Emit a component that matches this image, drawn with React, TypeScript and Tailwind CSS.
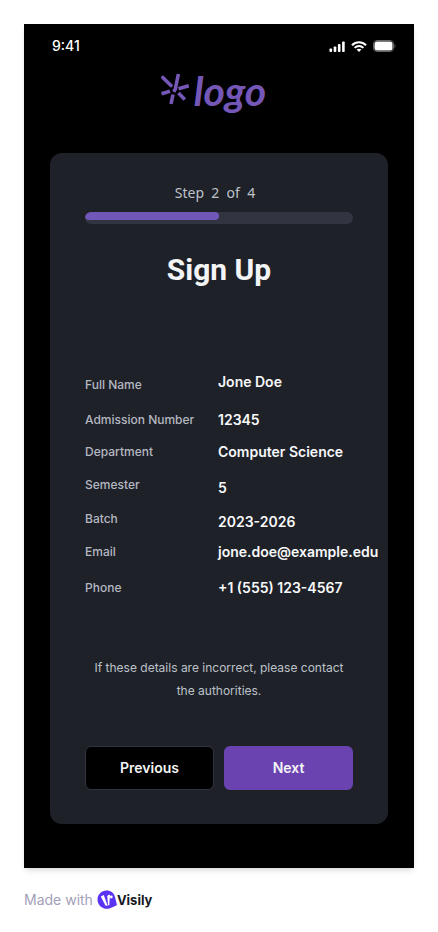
import React from "react";

type Detail = { label: string; value: string; row: string };

const details: Detail[] = [
  { label: "Full Name", value: "Jone Doe", row: "items-end" },
  { label: "Admission Number", value: "12345", row: "mt-3 items-center" },
  { label: "Department", value: "Computer Science", row: "mt-1.5 items-center" },
  { label: "Semester", value: "5", row: "mt-2.5 items-start" },
  { label: "Batch", value: "2023-2026", row: "mt-2 items-start" },
  { label: "Email", value: "jone.doe@example.edu", row: "mt-1 items-center" },
  { label: "Phone", value: "+1 (555) 123-4567", row: "mt-2.5 items-center" },
];

function StatusBar() {
  return (
    <div className="flex h-11 items-center justify-between pr-[18px] pl-7 text-white">
      <span className="text-sm font-medium">9:41</span>
      <div className="flex items-center gap-1.5" aria-hidden="true">
        <svg width="16" height="11" viewBox="0 0 16 11" fill="currentColor">
          <rect x="0.5" y="7.5" width="2.6" height="3.5" rx=".8" />
          <rect x="4.7" y="5.5" width="2.6" height="5.5" rx=".8" />
          <rect x="8.9" y="3" width="2.6" height="8" rx=".8" />
          <rect x="13.1" y="0.5" width="2.6" height="10.5" rx=".8" />
        </svg>
        <svg width="16" height="11" viewBox="0 0 16 11" fill="none" stroke="currentColor" strokeWidth="2">
          <path d="M1 4.2C5 .2 11 .2 15 4.2" />
          <path d="M3.6 6.9c2.5-2.5 6.3-2.5 8.8 0" />
          <path d="M5.6 8.6c1.4-1.3 3.4-1.3 4.8 0L8 11z" fill="currentColor" stroke="none" />
        </svg>
        <svg width="23" height="12" viewBox="0 0 23 12">
          <rect x=".5" y=".5" width="20" height="11" rx="3.5" fill="none" stroke="#666" />
          <rect x="1.5" y="1.5" width="18" height="9" rx="2.5" fill="#fff" />
          <path d="M21.5 4c1.3.5 1.3 3.5 0 4z" fill="#666" />
        </svg>
      </div>
    </div>
  );
}

function Logo() {
  return (
    <div className="flex h-[50px] items-start justify-center gap-1 pr-3 text-[#7557b8]">
      <svg className="mt-1" width="30" height="34" viewBox="0 0 30 34" fill="none" stroke="currentColor" strokeWidth="3.6" aria-hidden="true">
        <path d="M18.4 2L15.3 17L13.7 19.8" />
        <path d="M2.8 5.5L11 13.5" strokeLinecap="round" />
        <path d="M1.5 21.8L10 19.2" />
        <path d="M13 22.5L11 32" />
        <path d="M18.5 21L24.8 27.5" />
        <path d="M18.5 16.8L28.8 13.8" />
      </svg>
      <span className="font-['Lato',sans-serif] text-[41px] leading-[46px] font-bold italic">logo</span>
    </div>
  );
}

export default function App() {
  return (
    <div className="min-h-screen bg-white p-6 font-['Inter',sans-serif]">
      <main className="bg-black pb-11 shadow-md">
        <StatusBar />
        <Logo />
        <section className="mx-[26px] mt-[35px] rounded-xl bg-[#1f2128] px-[35px] pt-[30px] pb-[34px]">
          <p className="pr-2 text-center font-['Noto_Sans',sans-serif] text-sm leading-5 whitespace-pre text-[#bdc1ca]">
            {"Step  2  of  4"}
          </p>
          <div
            className="mt-[9px] h-3 overflow-hidden rounded-full bg-[#323541]"
            role="progressbar"
            aria-label="Sign up progress"
            aria-valuemin={0}
            aria-valuemax={4}
            aria-valuenow={2}
          >
            <div className="h-2 w-1/2 rounded-full bg-[#7157b8]" />
          </div>
          <h1 className="mt-7 text-center font-['Roboto',sans-serif] text-3xl leading-9 font-bold text-[#f3f4f6]">
            Sign Up
          </h1>
          <dl className="mt-[81px]">
            {details.map((d) => (
              <div key={d.label} className={`grid grid-cols-[133px_1fr] ${d.row}`}>
                <dt className="text-xs leading-5 font-medium text-[#b4b8c1]">{d.label}</dt>
                <dd className="text-sm leading-[26px] font-semibold whitespace-nowrap text-[#f8f9fa]">{d.value}</dd>
              </div>
            ))}
          </dl>
          <p className="mt-[55px] text-center text-xs leading-[23px] text-[#bdc1ca]">
            If these details are incorrect, please contact the authorities.
          </p>
          <div className="mt-11 grid grid-cols-2 gap-2.5 text-sm font-semibold text-[#f3f4f6]">
            <button type="button" className="h-11 rounded-md border border-[#323541] bg-black">
              Previous
            </button>
            <button type="button" className="h-11 rounded-md bg-[#6b43b0]">
              Next
            </button>
          </div>
        </section>
      </main>
      <footer className="mt-[22px] flex h-5 items-center text-sm">
        <span className="text-[#a3a0b8]">Made with</span>
        <svg className="ml-1" width="20" height="20" viewBox="0 0 20 20" aria-hidden="true">
          <path
            d="M9.5.5C14 .5 17 3 18 7l1.8 7.2c.2.8-.2 1.4-1 1.6L13 18.3C7 20.5.5 16 .5 9.8.5 4.5 4.5.5 9.5.5z"
            fill="#5a33f5"
          />
          <path d="M3.8 6.5L6.8 5l3.2 9 .8 1.5-2.3.3z" fill="#fff" />
          <path d="M10.3 6.2c.3-1.4 1.8-2 2.7-1.2L12.3 15l-1.3.5z" fill="#fff" />
          <circle cx="14.3" cy="7" r="1.4" fill="#fff" />
        </svg>
        <span className="text-[13px] font-bold text-[#171a1f]">Visily</span>
      </footer>
    </div>
  );
}
